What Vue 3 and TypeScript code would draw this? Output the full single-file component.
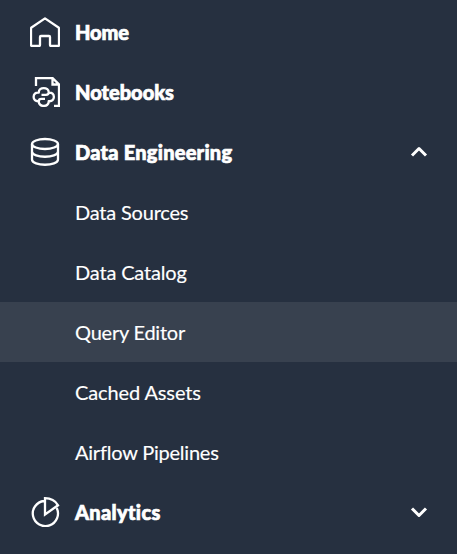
<script setup lang="ts">
type IconName = 'home' | 'notebook' | 'database' | 'chart'

interface NavItem {
  label: string
  tracking: number
  icon?: IconName
  chevron?: 'up' | 'down'
  active?: boolean
}

const items: NavItem[] = [
  { label: 'Home', icon: 'home', tracking: -0.1 },
  { label: 'Notebooks', icon: 'notebook', tracking: 0 },
  { label: 'Data Engineering', icon: 'database', chevron: 'up', tracking: 0.23 },
  { label: 'Data Sources', tracking: -0.2 },
  { label: 'Data Catalog', tracking: -0.17 },
  { label: 'Query Editor', active: true, tracking: -0.22 },
  { label: 'Cached Assets', tracking: -0.12 },
  { label: 'Airflow Pipelines', tracking: -0.22 },
  { label: 'Analytics', icon: 'chart', chevron: 'down', tracking: 0.33 },
]
</script>

<template>
  <nav class="sidebar">
    <a
      v-for="item in items"
      :key="item.label"
      class="row"
      :class="{ section: item.icon, active: item.active }"
    >
      <span class="icon">
        <svg v-if="item.icon" viewBox="0 0 30 30" width="30" height="30">
          <path v-if="item.icon === 'home'" d="M1 28V11.5Q1 10.9 1.5 10.5L15 1.4L28.5 10.5Q29 10.9 29 11.5V28Q29 29 28 29H21Q20 29 20 28V20Q20 19 19 19H11Q10 19 10 20V28Q10 29 9 29H2Q1 29 1 28Z" />
          <template v-else-if="item.icon === 'notebook'">
            <path class="sharp" d="M6 9V1H22.5L29 7.5V29H24M22.5 1V7.5H29" />
            <path d="M8.8 15.6C8.3 9.5 19.2 9.5 18.7 15.6C25.6 14.6 25.6 25.2 18.7 24.2C19.2 30.5 8.3 30.5 8.8 24.2C1.9 25.2 1.9 14.6 8.8 15.6ZM18.7 15.6C18.7 17.2 17.8 17.8 16 17.8H11.5M8.8 24.2C8.8 22.4 9.7 21.9 11.5 21.9H15" />
          </template>
          <template v-else-if="item.icon === 'database'">
            <ellipse cx="15" cy="7" rx="13" ry="5" />
            <path d="M2 7V22.5C2 29.5 28 29.5 28 22.5V7M2 14.5C2 21.5 28 21.5 28 14.5" />
          </template>
          <path v-else class="sharp" d="M14 4A12.6 12.6 0 1 0 26.7 11M15 1.2V17.5L28 8.3C25.5 4 21 1.2 15 1.2Z" />
        </svg>
      </span>
      <span class="label" :style="{ letterSpacing: item.tracking + 'px' }">{{ item.label }}</span>
      <svg v-if="item.chevron" class="chevron" viewBox="0 0 18 12" width="18" height="12">
        <path :d="item.chevron === 'up' ? 'M2 9.5L9 2.5L16 9.5' : 'M2 2.5L9 9.5L16 2.5'" />
      </svg>
    </a>
  </nav>
</template>

<style>
body {
  background: #263040;
}
</style>

<style scoped>
.sidebar {
  box-sizing: border-box;
  height: 554px;
  padding-top: 2px;
  overflow: hidden;
  background: #263040;
  color: #fff;
  font: 400 20px/60px Lato, sans-serif;
}
.row {
  box-sizing: border-box;
  display: flex;
  align-items: center;
  height: 60px;
  padding: 0 29px 0 30px;
}
.active {
  background: #38414f;
}
.section {
  font-weight: 900;
}
.icon {
  display: flex;
  width: 30px;
  margin-right: 15px;
}
.label {
  flex: 1;
  white-space: nowrap;
  -webkit-text-stroke: 0.15px #fff;
}
.section .label {
  -webkit-text-stroke-width: 0.7px;
}
svg {
  fill: none;
  stroke: #fff;
  stroke-width: 2.3;
  stroke-linejoin: round;
}
.sharp {
  stroke-linejoin: miter;
}
.chevron {
  stroke-width: 3;
}
</style>
